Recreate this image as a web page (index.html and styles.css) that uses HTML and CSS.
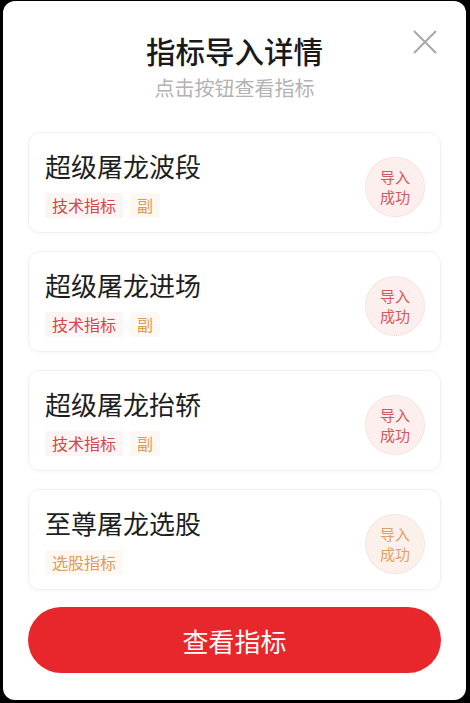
FILE: index.html
```html
<!DOCTYPE html>
<html lang="zh-CN">
<head>
  <meta charset="UTF-8">
  <title>指标导入详情</title>
  <link rel="stylesheet" href="styles.css">
</head>
<body>

<div class="modal">
  <svg class="close" width="24" height="24" viewBox="0 0 24 24"><path d="M1 1 L23 23 M23 1 L1 23" stroke="#a8a8a8" stroke-width="2" fill="none"/></svg>

  <div class="head">
    <h2 class="title">指标导入详情</h2>
    <p class="subtitle">点击按钮查看指标</p>
  </div>

  <div class="list">
    <div class="card">
      <div class="info">
        <div class="name">超级屠龙波段</div>
        <div class="tags"><span class="tag red">技术指标</span><span class="tag orange">副</span></div>
      </div>
      <div class="badge red"><span>导入</span><span>成功</span></div>
    </div>
    <div class="card">
      <div class="info">
        <div class="name">超级屠龙进场</div>
        <div class="tags"><span class="tag red">技术指标</span><span class="tag orange">副</span></div>
      </div>
      <div class="badge red"><span>导入</span><span>成功</span></div>
    </div>
    <div class="card">
      <div class="info">
        <div class="name">超级屠龙抬轿</div>
        <div class="tags"><span class="tag red">技术指标</span><span class="tag orange">副</span></div>
      </div>
      <div class="badge red"><span>导入</span><span>成功</span></div>
    </div>
    <div class="card">
      <div class="info">
        <div class="name">至尊屠龙选股</div>
        <div class="tags"><span class="tag orange">选股指标</span></div>
      </div>
      <div class="badge orange"><span>导入</span><span>成功</span></div>
    </div>
  </div>

  <button class="view-btn">查看指标</button>
</div>

</body>
</html>
```

FILE: styles.css
```css
* { box-sizing: border-box; }
body { margin: 0; background: #000; padding: 1px 4px 3px 3px; font-family: "Noto Sans CJK SC", "Noto Sans", sans-serif; }
.modal { position: relative; background: #fff; border-radius: 12px; height: 699px; padding: 32px 25px 27px 25px; display: flex; flex-direction: column; }
.close { position: absolute; top: 29px; right: 29px; }
.head { text-align: center; }
.title { margin: 0; font-size: 29.5px; line-height: 34px; font-weight: 500; color: #1a1a1a; }
.subtitle { margin: 9px 0 0; font-size: 20px; line-height: 24px; color: #b3b3b3; }
.list { display: flex; flex-direction: column; gap: 18px; margin-top: 32px; }
.card { height: 101px; border: 1px solid #f1f1f1; border-radius: 12px; box-shadow: 0 1px 4px rgba(0,0,0,0.04); padding: 17px 15px 0 16px; display: flex; justify-content: space-between; }
.name { font-size: 26px; line-height: 32px; color: #1e1e1e; }
.tags { display: flex; gap: 7px; margin-top: 11px; }
.tag { height: 25px; line-height: 25px; padding: 0 7px; font-size: 16px; border-radius: 2px; }
.tag.red { color: #d5464a; background: #fdf5f4; }
.tag.orange { color: #e39a52; background: #fdf8f1; }
.badge { width: 60px; height: 60px; border-radius: 50%; margin-top: 7px; font-size: 15px; text-align: center; border: 1px dotted #ecd6d4; display: flex; flex-direction: column; justify-content: center; gap: 0; }
.badge span { display: block; height: 20px; line-height: 20px; overflow: hidden; }
.badge.red { color: #d5585a; background: #fcefed; }
.badge.orange { color: #e3a064; background: #fcf0ea; }
.view-btn { margin-top: 17px; height: 66px; border: none; border-radius: 33px; background: #e8272c; color: #fff; font-family: inherit; font-size: 26px; width: 100%; }
```
